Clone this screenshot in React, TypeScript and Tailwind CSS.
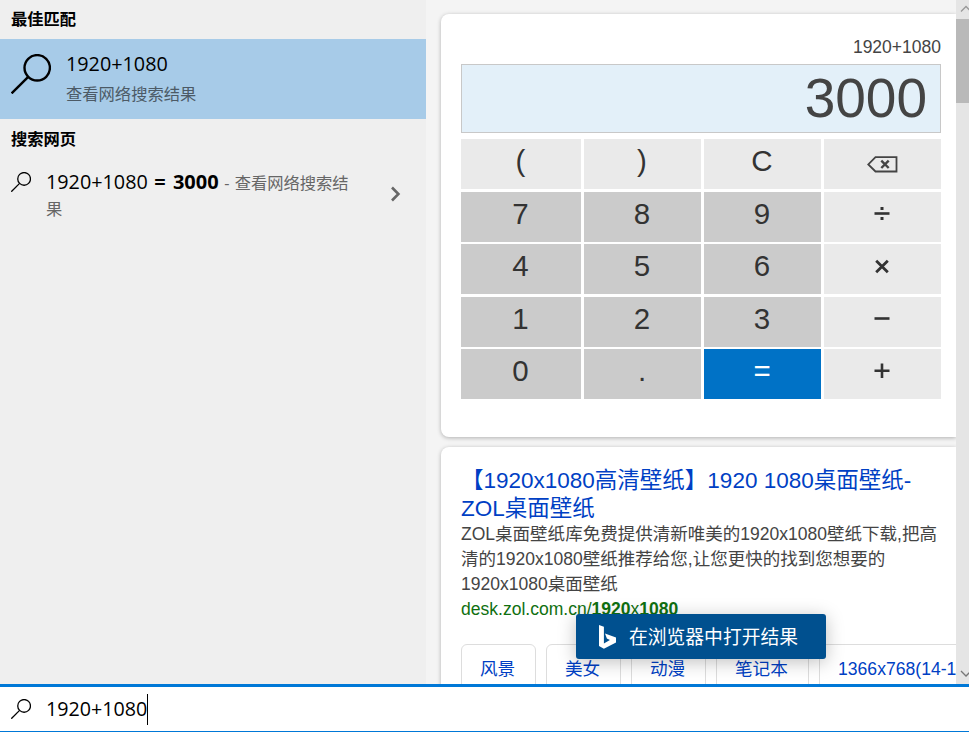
import type { ReactNode } from 'react';

interface CalcKey {
  label: string;
  kind: 'digit' | 'light' | 'equals' | 'operator' | 'delete';
}

const keys: CalcKey[] = [
  { label: '(', kind: 'light' },
  { label: ')', kind: 'light' },
  { label: 'C', kind: 'light' },
  { label: 'Delete', kind: 'delete' },
  { label: '7', kind: 'digit' },
  { label: '8', kind: 'digit' },
  { label: '9', kind: 'digit' },
  { label: '÷', kind: 'operator' },
  { label: '4', kind: 'digit' },
  { label: '5', kind: 'digit' },
  { label: '6', kind: 'digit' },
  { label: '×', kind: 'operator' },
  { label: '1', kind: 'digit' },
  { label: '2', kind: 'digit' },
  { label: '3', kind: 'digit' },
  { label: '−', kind: 'operator' },
  { label: '0', kind: 'digit' },
  { label: '.', kind: 'digit' },
  { label: '=', kind: 'equals' },
  { label: '+', kind: 'operator' },
];

const keyStyles = {
  digit: 'bg-[#cbcbcb] text-[#333]',
  light: 'bg-[#eaeaea] text-[#333]',
  operator: 'bg-[#eaeaea] text-[#333]',
  delete: 'bg-[#eaeaea] text-[#444]',
  equals: 'bg-[#0072c6] text-white',
};

// Operators are drawn as strokes so they stay crisp at this size
const operatorPaths: Record<string, ReactNode> = {
  '÷': (
    <>
      <path d="M0.5 7.5h15" strokeWidth="2.6" />
      <path d="M6.5 2.5h3M6.5 12.5h3" strokeWidth="3" />
    </>
  ),
  '×': <path d="M2.2 2.8l11.6 11.4M13.8 2.8L2.2 14.2" strokeWidth="2.8" />,
  '−': <path d="M0.5 7.5h15" strokeWidth="2.6" />,
  '+': <path d="M0.5 7.8h15M8 0.5v14.5" strokeWidth="2.6" />,
};

const tags = [
  { label: '风景', width: 'w-[75px]' },
  { label: '美女', width: 'w-[75px]' },
  { label: '动漫', width: 'w-[75px]' },
  { label: '笔记本', width: 'w-[93px]' },
  { label: '1366x768(14-1', width: 'w-[190px]' },
];

function SearchIcon({ size, strokeWidth }: { size: number; strokeWidth: number }) {
  return (
    <svg width={size} height={size} viewBox="0 0 40 40" fill="none" stroke="currentColor" strokeWidth={strokeWidth}>
      <circle cx="26.2" cy="13.8" r="12.7" />
      <path d="M17.2 22.8L0.6 39.4" />
    </svg>
  );
}

function DeleteIcon() {
  return (
    <svg width="31" height="17" viewBox="0 0 31 17" fill="none" stroke="currentColor" strokeWidth="1.8">
      <path d="M8.5 1.2H29.5V15.5H8.5L1.3 8.4z" />
      <path d="M14.3 4.6l7.4 7.4M21.7 4.6l-7.4 7.4" strokeWidth="2.4" />
    </svg>
  );
}

function BingIcon() {
  return (
    <svg width="17" height="24" viewBox="0 0 17 24" fill="#fff">
      <path d="M0 0l4.9 1.8v16.6l6-3.5-3-1.4L6 8.6 17 12.4v5.2L4.9 23.8 0 21z" />
    </svg>
  );
}

function CalculatorKey({ item }: { item: CalcKey }) {
  return (
    <button className={`flex justify-center pr-px text-[29.5px] leading-[43px] ${keyStyles[item.kind]}`}>
      {item.kind === 'delete' && <span className="mt-[17px]"><DeleteIcon /></span>}
      {item.kind === 'operator' && (
        <svg className="mt-[14px]" width="16" height="16" viewBox="0 0 16 16" fill="none" stroke="currentColor">
          {operatorPaths[item.label]}
        </svg>
      )}
      {item.kind !== 'delete' && item.kind !== 'operator' && item.label}
    </button>
  );
}

function Calculator() {
  return (
    <section className="h-[423px] shrink-0 rounded-l-lg bg-white pt-5 pl-5 shadow-[0_1px_4px_rgba(0,0,0,0.28)]">
      <div className="w-[480px]">
        <div className="h-[30px] text-right text-[17.5px] leading-[26px] text-[#444]">1920+1080</div>
        <div className="h-[69px] border border-[#c8c8c8] bg-[#e3f0f9] pr-[13px] text-right text-[55px] leading-[67px] text-[#444]">
          3000
        </div>
        <div className="mt-1.5 grid h-[260px] grid-cols-[120px_117px_117px_117px] grid-rows-5 gap-x-[3px] gap-y-[2.5px]">
          {keys.map((item) => (
            <CalculatorKey key={item.label} item={item} />
          ))}
        </div>
      </div>
    </section>
  );
}

function WebResult() {
  return (
    <section className="mt-[10px] h-[300px] shrink-0 rounded-l-lg bg-white pt-5 pl-5 whitespace-nowrap shadow-[0_1px_4px_rgba(0,0,0,0.28)]">
      <h2 className="text-[22.5px] leading-7 text-[#003fc4]">
        【1920x1080高清壁纸】1920 1080桌面壁纸-<br />ZOL桌面壁纸
      </h2>
      <p className="-mt-px text-[17.53px] leading-[25px] text-[#444]">
        ZOL桌面壁纸库免费提供清新唯美的1920x1080壁纸下载,把高<br />
        清的1920x1080壁纸推荐给您,让您更快的找到您想要的<br />
        1920x1080桌面壁纸
      </p>
      <div className="text-[17.55px] leading-[25px] text-[#107010]">
        desk.zol.com.cn/<b>1920</b>x<b>1080</b>
      </div>
      <div className="mt-[22px] flex gap-[10px] text-[17.6px] text-[#003fc4]">
        {tags.map((tag) => (
          <div key={tag.label} className={`h-[58px] shrink-0 rounded-md border border-[#ddd] px-[18px] leading-[48px] ${tag.width}`}>
            {tag.label}
          </div>
        ))}
      </div>
    </section>
  );
}

function SuggestionPanel() {
  return (
    <aside className="w-[426px] shrink-0 bg-[#efefef]">
      <h3 className="h-[39px] pl-[11px] text-[16.3px] leading-[39px] font-bold">最佳匹配</h3>
      <div className="flex h-20 bg-[#a7cbe8] pt-[15px] pl-[11px]">
        <SearchIcon size={40} strokeWidth={2.4} />
        <div className="ml-[15px]">
          <div className="text-[19.8px] leading-5">1920+1080</div>
          <div className="mt-[9px] text-[16.3px] leading-[22px] text-[#4c5a66]">查看网络搜索结果</div>
        </div>
      </div>
      <h3 className="h-10 pl-[11px] text-[16.3px] leading-10 font-bold">搜索网页</h3>
      <div className="flex pt-[10px] pl-[11px]">
        <span className="mt-[3px]"><SearchIcon size={20} strokeWidth={2.6} /></span>
        <div className="ml-[15px] w-[330px] text-[16.3px] leading-[26px] whitespace-nowrap text-[#666]">
          <span className="text-[19.8px] text-black">1920+1080</span>
          <b className="mr-[5.5px] ml-[6.5px] text-[20px] text-black [word-spacing:2px]">= 3000</b>
          <span className="[word-spacing:1px]">- 查看网络搜索结</span><br />果
        </div>
        <svg className="mt-[17px] ml-[14px]" width="11" height="16" viewBox="0 0 11 16" fill="none" stroke="#666" strokeWidth="2.6">
          <path d="M2 1.5l6.4 6.5L2 14.5" />
        </svg>
      </div>
    </aside>
  );
}

export default function App() {
  return (
    <div className="flex h-[732px] w-[969px] flex-col overflow-hidden bg-white font-['Open_Sans','Noto_Sans_CJK_SC',sans-serif] text-black">
      <div className="relative flex h-[684px] shrink-0 overflow-hidden">
        <SuggestionPanel />
        <main className="flex w-[530px] flex-col overflow-hidden bg-[#f4f4f4] pt-[14px] pl-[15px] font-['Liberation_Sans','Noto_Sans_CJK_SC',sans-serif]">
          <Calculator />
          <WebResult />
        </main>
        {/* Scrollbar */}
        <div className="flex w-[13px] shrink-0 flex-col overflow-hidden bg-[#e5e5e5]">
          <svg className="h-[19px] w-[19px] shrink-0" viewBox="0 0 19 19" fill="none" stroke="#999" strokeWidth="1.3">
            <path d="M5 11.5l5-5 5 5" />
          </svg>
          <div className="h-[84px] bg-[#b9b9b9]" />
          <svg className="mt-auto h-[19px] w-[19px] shrink-0" viewBox="0 0 19 19" fill="none" stroke="#777" strokeWidth="1.3">
            <path d="M5 6l5 5 5-5" />
          </svg>
        </div>
        <button className="absolute top-[614px] left-[576px] flex h-[45px] w-[250px] items-center rounded-[3px] bg-[#00508f] pl-[23px] text-[18.8px] text-white shadow-[0_3px_18px_rgba(0,0,0,0.25)]">
          <BingIcon />
          <span className="ml-[13px] pt-px leading-[45px] whitespace-nowrap">在浏览器中打开结果</span>
        </button>
      </div>
      <div className="flex h-12 items-center border-t-[3px] border-b border-[#0078d7] bg-white pl-[11px]">
        <SearchIcon size={20} strokeWidth={2.6} />
        <span className="ml-[15px] text-[19.7px] leading-8">1920+1080</span>
        <span className="h-[31px] w-px bg-black" />
      </div>
    </div>
  );
}
